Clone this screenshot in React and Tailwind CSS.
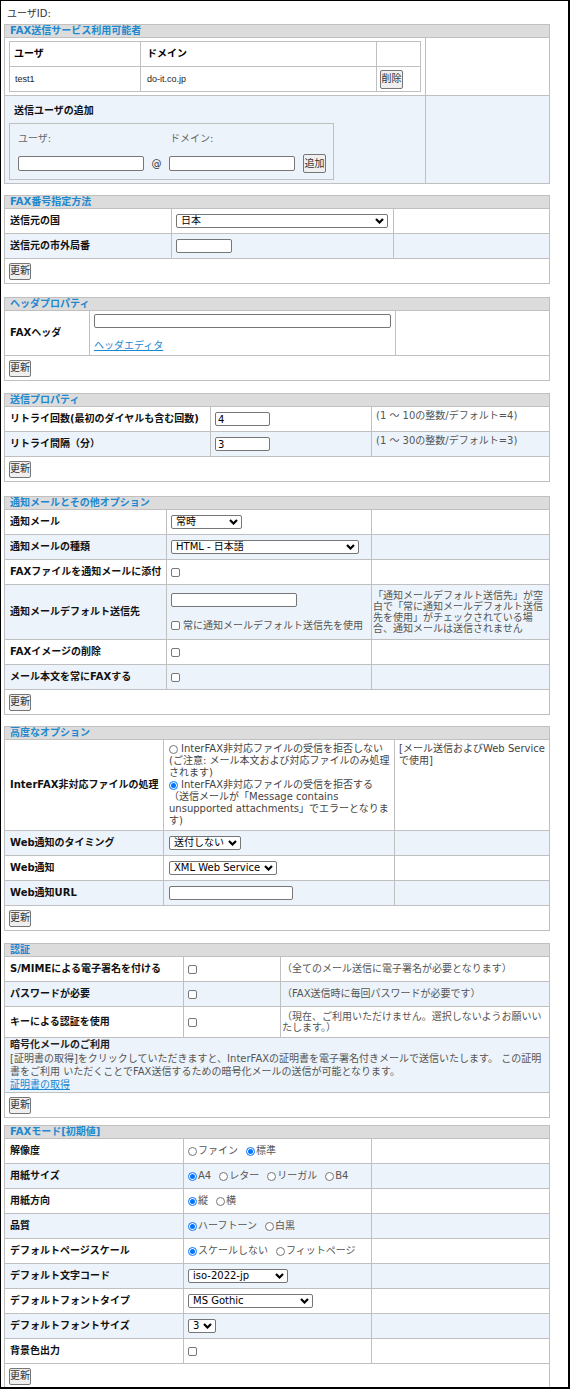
import React from "react";

function Sec({ title, className = "", children }) {
  return (
    <div className={`ml-[3px] w-[546px] border-x border-t border-[#c0c0c0] ${className}`}>
      <div className="h-[13px] border-b border-[#c0c0c0] bg-[#dcdcdc] pl-[5px] text-[10px] font-bold leading-[12px] text-[#2088cf] whitespace-nowrap">
        {title}
      </div>
      {children}
    </div>
  );
}

function Row({ blue, h = "h-[25px]", children }) {
  return (
    <div className={`flex ${h} border-b border-[#c0c0c0] ${blue ? "bg-[#ecf3fa]" : "bg-white"}`}>
      {children}
    </div>
  );
}

function Lbl({ w, children }) {
  return (
    <div className={`flex ${w} shrink-0 items-center whitespace-nowrap border-r border-[#c0c0c0] pl-[5px] text-[10px] font-bold leading-[12px] text-[#111]`}>
      {children}
    </div>
  );
}

function Mid({ w, className = "items-center", children }) {
  return (
    <div className={`flex ${w} shrink-0 border-r border-[#c0c0c0] pl-[4px] ${className}`}>
      {children}
    </div>
  );
}

function Note({ className = "items-center", children }) {
  return (
    <div className={`flex min-w-0 flex-1 overflow-hidden ${className} text-[10px] leading-[12px] text-[#555]`}>
      {children}
    </div>
  );
}

function Btn({ children, w = "w-[22px]", h = "h-[17px]" }) {
  return (
    <button
      type="button"
      className={`${w} ${h} shrink-0 rounded-[2px] border border-[#767676] bg-[#efefef] p-0 text-[10px] leading-none text-[#333]`}
    >
      {children}
    </button>
  );
}

function BtnRow() {
  return (
    <Row>
      <div className="flex items-center pl-[4px]">
        <Btn>更新</Btn>
      </div>
    </Row>
  );
}

function Input({ w, h = "h-[14px]", value = "" }) {
  return (
    <input
      type="text"
      defaultValue={value}
      className={`${w} ${h} shrink-0 rounded-[2px] border border-[#767676] bg-white px-[2px] py-0 text-[10px] leading-[12px] text-black outline-none`}
    />
  );
}

function Select({ w, value }) {
  return (
    <div className={`relative ${w} h-[14px] shrink-0`}>
      <select
        defaultValue={value}
        className="block h-full w-full appearance-none rounded-[2px] border border-[#767676] bg-white py-0 pl-[4px] pr-[14px] text-[10px] leading-[12px] text-black outline-none"
      >
        <option>{value}</option>
      </select>
      <svg
        className="pointer-events-none absolute right-[4px] top-[4px]"
        width="9"
        height="6"
        viewBox="0 0 9 6"
      >
        <path d="M1 1 L4.5 4.5 L8 1" fill="none" stroke="#000" strokeWidth="2.2" />
      </svg>
    </div>
  );
}

function Check() {
  return (
    <input
      type="checkbox"
      className="m-0 h-[9px] w-[9px] shrink-0 appearance-none rounded-[2px] border border-[#767676] bg-white"
    />
  );
}

function Radio({ on }) {
  return on ? (
    <span className="flex h-[9px] w-[9px] shrink-0 items-center justify-center rounded-full border border-[#0075ff] bg-white">
      <span className="h-[5px] w-[5px] rounded-full bg-[#0075ff]" />
    </span>
  ) : (
    <span className="h-[9px] w-[9px] shrink-0 rounded-full border border-[#767676] bg-white" />
  );
}

function Radios({ items }) {
  return (
    <div className="flex items-center gap-[8px] text-[10px] leading-[12px] text-[#555] whitespace-nowrap">
      {items.map(([on, t]) => (
        <span key={t} className="flex items-center gap-[1px]">
          <Radio on={on} />
          <span>{t}</span>
        </span>
      ))}
    </div>
  );
}

export default function App() {
  return (
    <div className="h-[1389px] w-[570px] overflow-hidden border-l border-t border-r-2 border-b-2 border-black bg-white font-['DejaVu_Sans','Noto_Sans_CJK_JP',sans-serif]">
      <div className="pl-[6px] pt-[7px] text-[10px] leading-[12px] text-[#333]">ユーザID:</div>

      {/* S1 */}
      <Sec title="FAX送信サービス利用可能者" className="mt-[4px]">
        <Row h="h-[58px]">
          <div className="w-[421px] shrink-0 border-r border-[#c0c0c0] pl-[4px] pt-[3px]">
            <div className="w-[412px] border border-[#c0c0c0] bg-white">
              <div className="flex h-[25px] border-b border-[#c0c0c0] text-[10px] font-bold leading-[12px] text-black">
                <div className="flex w-[131px] shrink-0 items-center border-r border-[#c0c0c0] pl-[4px]">ユーザ</div>
                <div className="flex w-[236px] shrink-0 items-center border-r border-[#c0c0c0] pl-[6px]">ドメイン</div>
                <div className="flex-1" />
              </div>
              <div className="flex h-[24px] font-['Liberation_Sans','Noto_Sans_CJK_JP',sans-serif] text-[9px] leading-[11px] text-[#222]">
                <div className="flex w-[131px] shrink-0 items-center border-r border-[#c0c0c0] pl-[5px]">test1</div>
                <div className="flex w-[236px] shrink-0 items-center border-r border-[#c0c0c0] pl-[6px]">do-it.co.jp</div>
                <div className="flex flex-1 items-center pl-[3px]">
                  <Btn w="w-[23px]" h="h-[19px]">削除</Btn>
                </div>
              </div>
            </div>
          </div>
          <div className="flex-1" />
        </Row>
        <Row blue h="h-[88px]">
          <div className="w-[421px] shrink-0 border-r border-[#c0c0c0] pl-[4px] pt-[9px]">
            <div className="pl-[5px] text-[10px] font-bold leading-[12px] text-[#111]">送信ユーザの追加</div>
            <div className="mt-[6px] h-[57px] w-[325px] border border-[#c0c0c0] pl-[8px] pt-[9px]">
              <div className="flex text-[10px] leading-[12px] text-[#666]">
                <span className="w-[152px]">ユーザ:</span>
                <span>ドメイン:</span>
              </div>
              <div className="mt-[9px] flex items-center">
                <Input w="w-[126px]" h="h-[15px]" />
                <span className="w-[25px] text-center text-[10px] leading-[12px] text-[#333]">@</span>
                <Input w="w-[126px]" h="h-[15px]" />
                <span className="ml-[8px] flex">
                  <Btn w="w-[23px]" h="h-[19px]">追加</Btn>
                </span>
              </div>
            </div>
          </div>
          <div className="flex-1" />
        </Row>
      </Sec>

      {/* S2 */}
      <Sec title="FAX番号指定方法" className="mt-[11px]">
        <Row>
          <Lbl w="w-[167px]">送信元の国</Lbl>
          <Mid w="w-[222px]">
            <Select w="w-[212px]" value="日本" />
          </Mid>
          <Note />
        </Row>
        <Row blue>
          <Lbl w="w-[167px]">送信元の市外局番</Lbl>
          <Mid w="w-[222px]">
            <Input w="w-[56px]" />
          </Mid>
          <Note />
        </Row>
        <BtnRow />
      </Sec>

      {/* S3 */}
      <Sec title="ヘッダプロパティ" className="mt-[13px]">
        <Row h="h-[45px]">
          <Lbl w="w-[85px]">FAXヘッダ</Lbl>
          <Mid w="w-[306px]" className="flex-col items-start pt-[3px]">
            <Input w="w-[297px]" />
            <a href="#" className="mt-[12px] text-[10px] leading-[12px] text-[#1a88d2] underline">
              ヘッダエディタ
            </a>
          </Mid>
          <Note />
        </Row>
        <BtnRow />
      </Sec>

      {/* S4 */}
      <Sec title="送信プロパティ" className="mt-[12px]">
        <Row>
          <Lbl w="w-[206px]">リトライ回数(最初のダイヤルも含む回数)</Lbl>
          <Mid w="w-[161px]">
            <Input w="w-[55px]" value="4" />
          </Mid>
          <Note className="items-start pl-[4px] pt-[3px]">
            <span className="whitespace-nowrap">(1 ～ 10の整数/デフォルト=4)</span>
          </Note>
        </Row>
        <Row blue>
          <Lbl w="w-[206px]">リトライ間隔（分）</Lbl>
          <Mid w="w-[161px]">
            <Input w="w-[55px]" value="3" />
          </Mid>
          <Note className="items-start pl-[4px] pt-[3px]">
            <span className="whitespace-nowrap">(1 ～ 30の整数/デフォルト=3)</span>
          </Note>
        </Row>
        <BtnRow />
      </Sec>

      {/* S5 */}
      <Sec title="通知メールとその他オプション" className="mt-[14px]">
        <Row>
          <Lbl w="w-[162px]">通知メール</Lbl>
          <Mid w="w-[205px]">
            <Select w="w-[71px]" value="常時" />
          </Mid>
          <Note />
        </Row>
        <Row blue>
          <Lbl w="w-[162px]">通知メールの種類</Lbl>
          <Mid w="w-[205px]">
            <Select w="w-[188px]" value="HTML - 日本語" />
          </Mid>
          <Note />
        </Row>
        <Row>
          <Lbl w="w-[162px]">FAXファイルを通知メールに添付</Lbl>
          <Mid w="w-[205px]">
            <Check />
          </Mid>
          <Note />
        </Row>
        <Row blue h="h-[55px]">
          <Lbl w="w-[162px]">通知メールデフォルト送信先</Lbl>
          <Mid w="w-[205px]" className="flex-col items-start justify-center gap-[13px]">
            <Input w="w-[126px]" />
            <div className="flex items-center gap-[3px] whitespace-nowrap text-[10px] leading-[12px] text-[#555]">
              <Check />
              <span>常に通知メールデフォルト送信先を使用</span>
            </div>
          </Mid>
          <Note className="items-center pl-[1px] leading-[11px]">
            <div className="whitespace-nowrap leading-[11px]">
              「通知メールデフォルト送信先」が空
              <br />
              白で「常に通知メールデフォルト送信
              <br />
              先を使用」がチェックされている場
              <br />
              合、通知メールは送信されません
            </div>
          </Note>
        </Row>
        <Row>
          <Lbl w="w-[162px]">FAXイメージの削除</Lbl>
          <Mid w="w-[205px]">
            <Check />
          </Mid>
          <Note />
        </Row>
        <Row blue>
          <Lbl w="w-[162px]">メール本文を常にFAXする</Lbl>
          <Mid w="w-[205px]">
            <Check />
          </Mid>
          <Note />
        </Row>
        <BtnRow />
      </Sec>

      {/* S6 */}
      <Sec title="高度なオプション" className="mt-[11px]">
        <Row h="h-[91px]">
          <Lbl w="w-[159px]">InterFAX非対応ファイルの処理</Lbl>
          <Mid w="w-[231px]" className="items-center pl-[5px]">
            <div className="whitespace-nowrap text-[10px] leading-[12px] text-[#444]">
              <div className="flex items-center gap-[3px]">
                <Radio />
                <span>InterFAX非対応ファイルの受信を拒否しない</span>
              </div>
              <div>(ご注意: メール本文および対応ファイルのみ処理</div>
              <div>されます)</div>
              <div className="flex items-center gap-[3px]">
                <Radio on />
                <span>InterFAX非対応ファイルの受信を拒否する</span>
              </div>
              <div>（送信メールが「Message contains</div>
              <div>unsupported attachments」でエラーとなりま</div>
              <div>す)</div>
            </div>
          </Mid>
          <Note className="items-start pl-[4px] pt-[3px]">
            <div className="whitespace-nowrap text-[#444]">
              [メール送信およびWeb Service
              <br />
              で使用]
            </div>
          </Note>
        </Row>
        <Row blue>
          <Lbl w="w-[159px]">Web通知のタイミング</Lbl>
          <Mid w="w-[231px]" className="items-center pl-[5px]">
            <Select w="w-[72px]" value="送付しない" />
          </Mid>
          <Note />
        </Row>
        <Row>
          <Lbl w="w-[159px]">Web通知</Lbl>
          <Mid w="w-[231px]" className="items-center pl-[5px]">
            <Select w="w-[108px]" value="XML Web Service" />
          </Mid>
          <Note />
        </Row>
        <Row blue>
          <Lbl w="w-[159px]">Web通知URL</Lbl>
          <Mid w="w-[231px]" className="items-center pl-[5px]">
            <Input w="w-[124px]" />
          </Mid>
          <Note />
        </Row>
        <BtnRow />
      </Sec>

      {/* S7 */}
      <Sec title="認証" className="mt-[12px]">
        <Row>
          <Lbl w="w-[179px]">S/MIMEによる電子署名を付ける</Lbl>
          <Mid w="w-[97px]">
            <Check />
          </Mid>
          <Note className="items-center pl-[1px]">
            <span className="whitespace-nowrap">（全てのメール送信に電子署名が必要となります）</span>
          </Note>
        </Row>
        <Row blue>
          <Lbl w="w-[179px]">パスワードが必要</Lbl>
          <Mid w="w-[97px]">
            <Check />
          </Mid>
          <Note className="items-center pl-[1px]">
            <span className="whitespace-nowrap">（FAX送信時に毎回パスワードが必要です）</span>
          </Note>
        </Row>
        <Row h="h-[31px]">
          <Lbl w="w-[179px]">キーによる認証を使用</Lbl>
          <Mid w="w-[97px]">
            <Check />
          </Mid>
          <Note className="items-center pl-[1px]">
            <div className="whitespace-nowrap leading-[11px]">
              （現在、ご利用いただけません。選択しないようお願いい
              <br />
              たします。）
            </div>
          </Note>
        </Row>
        <Row blue h="h-[55px]">
          <div className="flex flex-1 flex-col whitespace-nowrap pl-[5px] text-[10px]">
            <div className="font-bold leading-[14px] text-[#222]">暗号化メールのご利用</div>
            <div className="leading-[13px] text-[#555]">
              [証明書の取得]をクリックしていただきますと、InterFAXの証明書を電子署名付きメールで送信いたします。 この証明
            </div>
            <div className="leading-[13px] text-[#555]">
              書をご利用 いただくことでFAX送信するための暗号化メールの送信が可能となります。
            </div>
            <div className="leading-[13px]">
              <a href="#" className="text-[#1a88d2] underline">
                証明書の取得
              </a>
            </div>
          </div>
        </Row>
        <BtnRow />
      </Sec>

      {/* S8 */}
      <Sec title="FAXモード[初期値]" className="mt-[7px]">
        <Row>
          <Lbl w="w-[179px]">解像度</Lbl>
          <Mid w="w-[188px]">
            <Radios items={[[false, "ファイン"], [true, "標準"]]} />
          </Mid>
          <Note />
        </Row>
        <Row blue>
          <Lbl w="w-[179px]">用紙サイズ</Lbl>
          <Mid w="w-[188px]">
            <Radios items={[[true, "A4"], [false, "レター"], [false, "リーガル"], [false, "B4"]]} />
          </Mid>
          <Note />
        </Row>
        <Row>
          <Lbl w="w-[179px]">用紙方向</Lbl>
          <Mid w="w-[188px]">
            <Radios items={[[true, "縦"], [false, "横"]]} />
          </Mid>
          <Note />
        </Row>
        <Row blue>
          <Lbl w="w-[179px]">品質</Lbl>
          <Mid w="w-[188px]">
            <Radios items={[[true, "ハーフトーン"], [false, "白黒"]]} />
          </Mid>
          <Note />
        </Row>
        <Row>
          <Lbl w="w-[179px]">デフォルトページスケール</Lbl>
          <Mid w="w-[188px]">
            <Radios items={[[true, "スケールしない"], [false, "フィットページ"]]} />
          </Mid>
          <Note />
        </Row>
        <Row blue>
          <Lbl w="w-[179px]">デフォルト文字コード</Lbl>
          <Mid w="w-[188px]">
            <Select w="w-[100px]" value="iso-2022-jp" />
          </Mid>
          <Note />
        </Row>
        <Row>
          <Lbl w="w-[179px]">デフォルトフォントタイプ</Lbl>
          <Mid w="w-[188px]">
            <Select w="w-[125px]" value="MS Gothic" />
          </Mid>
          <Note />
        </Row>
        <Row blue>
          <Lbl w="w-[179px]">デフォルトフォントサイズ</Lbl>
          <Mid w="w-[188px]">
            <Select w="w-[28px]" value="3" />
          </Mid>
          <Note />
        </Row>
        <Row>
          <Lbl w="w-[179px]">背景色出力</Lbl>
          <Mid w="w-[188px]">
            <Check />
          </Mid>
          <Note />
        </Row>
        <BtnRow />
      </Sec>
    </div>
  );
}
